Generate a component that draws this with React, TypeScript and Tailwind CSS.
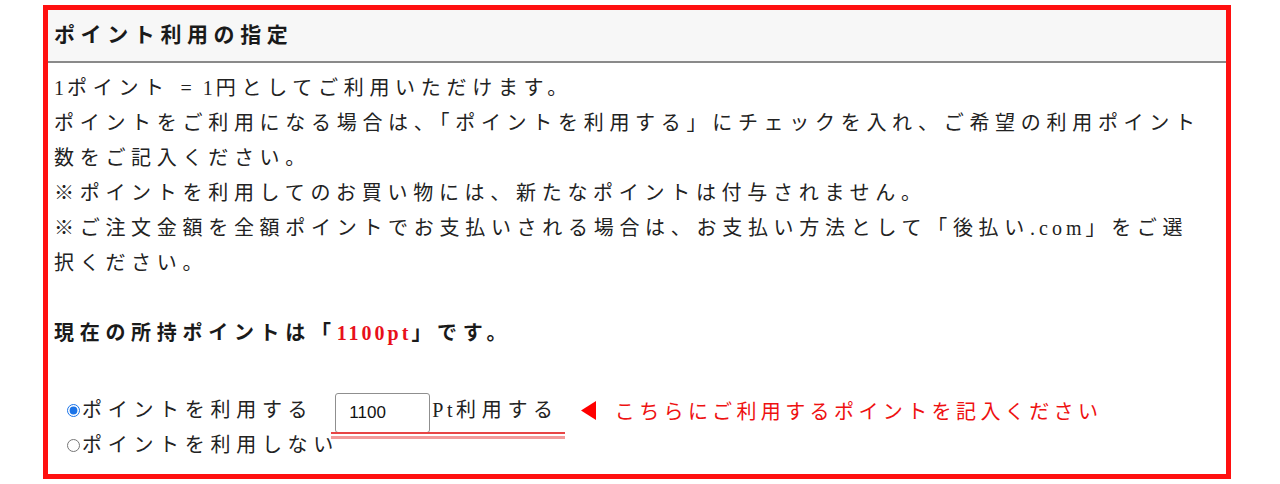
const serif = "font-['Liberation_Serif','Noto_Sans_CJK_JP',serif]";

function Radio({ checked }: { checked?: boolean }) {
  return (
    <input
      type="radio"
      name="use_point"
      defaultChecked={checked}
      className="ml-[13px] mr-[2px] h-[13px] w-[13px] accent-[#1a73e8]"
    />
  );
}

export default function App() {
  return (
    <div className="min-h-screen bg-white pt-[5px] pl-[43px]">
      <div className={`w-[1188px] h-[474px] border-[5px] border-[#ff1010] ${serif} text-[#222]`}>
        {/* Header */}
        <div className="h-[53px] bg-[#f7f7f7] border-b-2 border-[#8a8a8a] px-[6px] flex items-center">
          <h2 className="text-[21px] font-bold tracking-[5.6px] text-[#1a1a1a]">ポイント利用の指定</h2>
        </div>

        {/* Body */}
        <div className="px-[6px] pt-[8px] text-[20px] leading-[35px] tracking-[5.7px]">
          <p className="whitespace-nowrap">
            <span className="tracking-[3px]">1</span>ポイント <span className="tracking-[3px]">= 1</span>円としてご利用いただけます。
          </p>
          <p className="whitespace-nowrap">ポイントをご利用になる場合は、「ポイントを利用する」にチェックを入れ、ご希望の利用ポイント</p>
          <p className="whitespace-nowrap">数をご記入ください。</p>
          <p className="whitespace-nowrap">※ポイントを利用してのお買い物には、新たなポイントは付与されません。</p>
          <p className="whitespace-nowrap">
            ※ご注文金額を全額ポイントでお支払いされる場合は、お支払い方法として「後払い<span className="tracking-[4px]">.com</span>」をご選
          </p>
          <p className="whitespace-nowrap">択ください。</p>

          <p className="mt-[35px] font-bold whitespace-nowrap text-[#1a1a1a]">
            現在の所持ポイントは「<span className="text-[#e8101a] tracking-[3px]">1100pt</span>」です。
          </p>

          <div className="mt-[42px] flex items-center h-[35px] whitespace-nowrap">
            <Radio checked />
            <span>ポイントを利用する</span>
            <span className="relative ml-[22px] flex items-center">
              <input
                type="text"
                defaultValue="1100"
                className="mt-[4px] w-[95px] h-[40px] border border-[#8f8f8f] rounded-[3px] px-[13px] text-[17px] tracking-normal text-[#111] font-['Liberation_Sans',Arial,sans-serif] outline-none"
              />
              <span className="ml-[2px]">
                <span className="tracking-[3.5px]">Pt</span>利用する
              </span>
              <span className="absolute left-[-4px] right-[-6px] top-[43px] h-[7px] border-t-2 border-b-[3px] border-t-[#e84545] border-b-[#f39a9a]" />
            </span>
            <span className="ml-[22px] flex items-center text-[#ee1111] font-['Noto_Sans_CJK_JP',sans-serif] text-[20px] tracking-[4.4px]">
              <svg width="15" height="19" viewBox="0 0 15 19" className="mr-[19px]">
                <polygon points="15,0 15,19 0,9.5" fill="#ff0000" />
              </svg>
              こちらにご利用するポイントを記入ください
            </span>
          </div>

          <div className="flex items-center h-[35px] whitespace-nowrap">
            <Radio />
            <span>ポイントを利用しない</span>
          </div>
        </div>
      </div>
    </div>
  );
}
